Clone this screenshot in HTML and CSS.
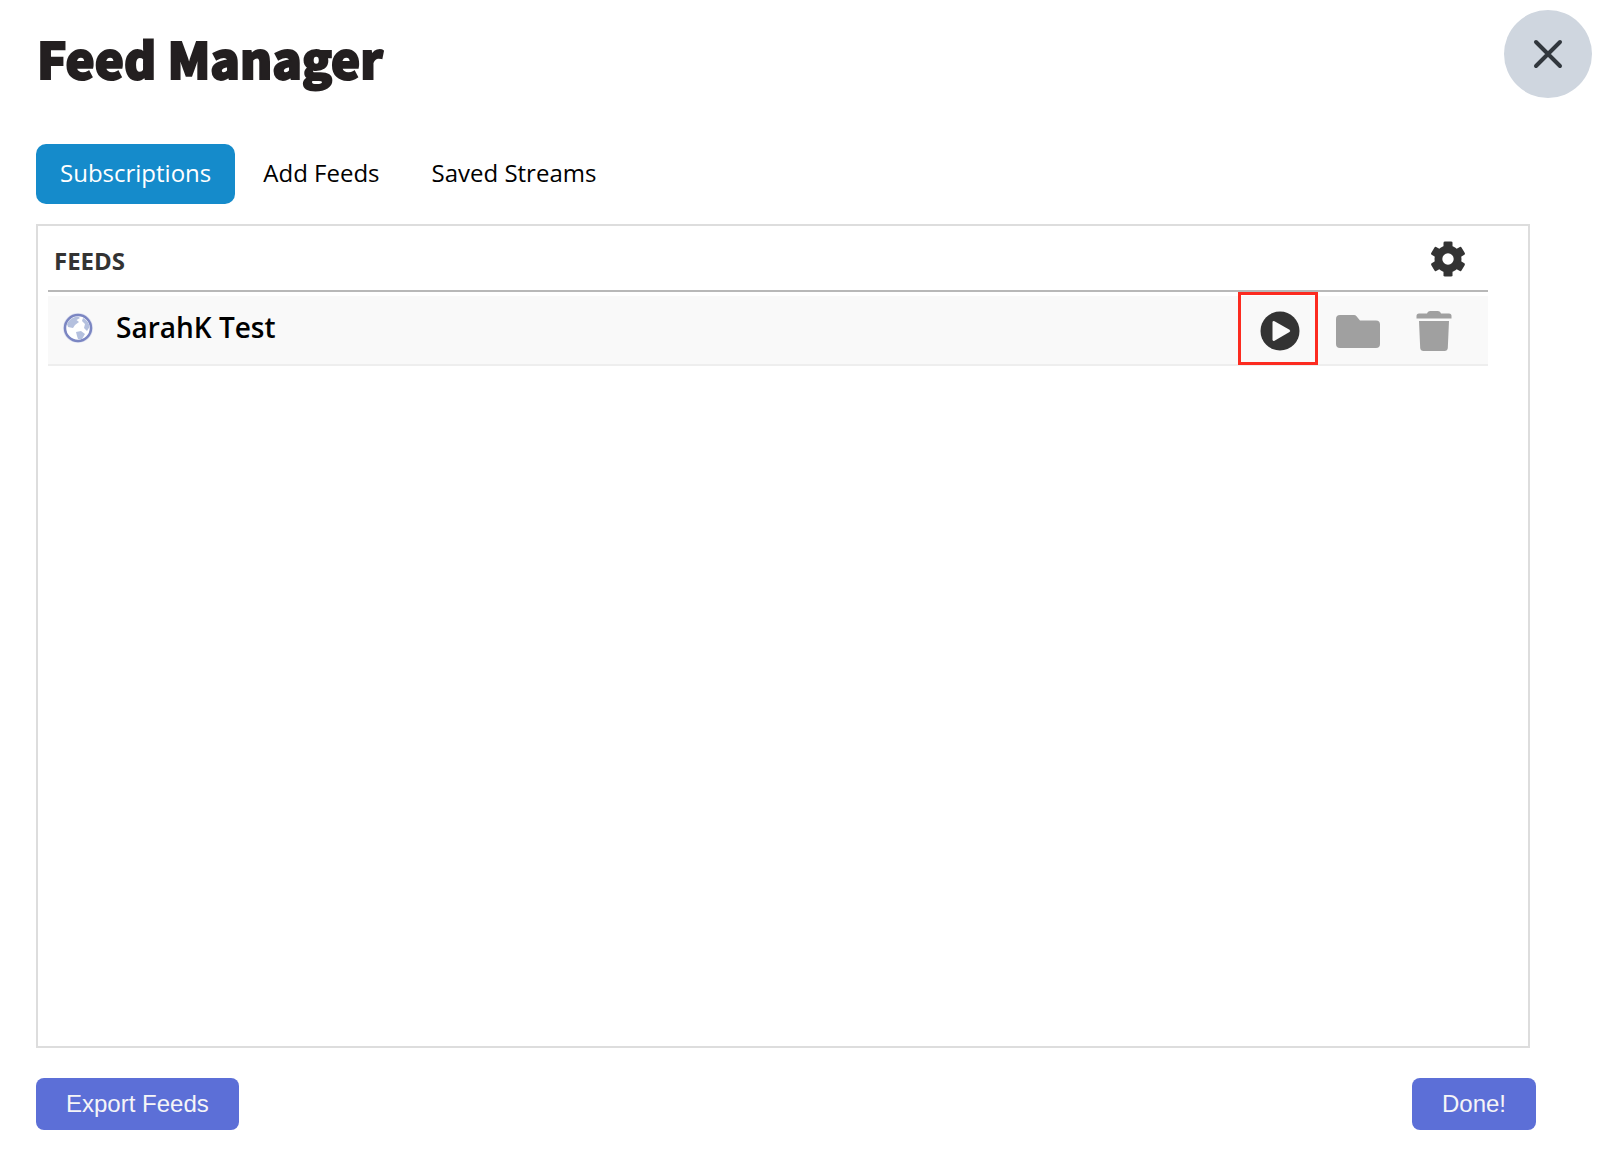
FILE: index.html
```html
<!DOCTYPE html>
<html lang="en">
<head>
<meta charset="utf-8">
<title>Feed Manager</title>
<link rel="stylesheet" href="styles.css">
</head>
<body>
<div class="dialog">
  <header class="header">
    <h1 class="title">Feed Manager</h1>
    <button class="close" type="button" aria-label="Close">
      <svg width="88" height="88" viewBox="0 0 88 88" fill="none" stroke="#31373d" stroke-width="4" stroke-linecap="round"><path d="M32 32L56 56M56 32L32 56"/></svg>
    </button>
  </header>
  <nav class="tabs">
    <a class="tab active" href="#subscriptions">Subscriptions</a>
    <a class="tab" href="#add">Add Feeds</a>
    <a class="tab" href="#streams">Saved Streams</a>
  </nav>
  <main class="panel">
    <div class="panel-head">
      <h2 class="panel-title">FEEDS</h2>
      <button class="icon-button" type="button" aria-label="Settings">
        <svg width="36" height="36" viewBox="-18 -18 36 36" fill="#333">
          <defs><path id="tooth" d="M-4.5 -10L-4.5 -16.300Q-4.500 -17.500 -3 -17.500H3Q4.500 -17.500 4.500 -16.300L4.500 -10Z"/></defs>
          <path fill-rule="evenodd" d="M0 -13.500A13.500 13.500 0 1 1 0 13.500A13.500 13.500 0 1 1 0 -13.500ZM0 -5.700A5.700 5.700 0 1 0 0 5.700A5.700 5.700 0 1 0 0 -5.700Z"/>
          <use href="#tooth"/><use href="#tooth" transform="rotate(60)"/><use href="#tooth" transform="rotate(120)"/><use href="#tooth" transform="rotate(180)"/><use href="#tooth" transform="rotate(240)"/><use href="#tooth" transform="rotate(300)"/>
        </svg>
      </button>
    </div>
    <ul class="feeds">
      <li class="feed">
        <svg class="globe" width="32" height="32" viewBox="0 0 32 32">
          <circle cx="16" cy="16" r="15" fill="#dfe2f1"/>
          <circle cx="16" cy="16" r="13" fill="#fff" stroke="#7b86c2" stroke-width="2.500"/>
          <path fill="#b4c0de" d="M5 12Q8 5 16 4.500L18 6L14.500 8L17 10L13 13L11 16L6 15ZM21 6Q27 9 27.500 15L25 19L22 16L23 12L20 9ZM14 20L19 19L23 22L20 27L16 27L15 24Z"/>
        </svg>
        <span class="feed-name">SarahK Test</span>
        <div class="actions">
          <button class="icon-button play" type="button" aria-label="Play">
            <svg width="40" height="40" viewBox="0 0 40 40"><circle cx="20" cy="20" r="19.500" fill="#333"/><path fill="#f9f9f9" d="M12.500 11.500Q12.500 9.500 14.500 10.200L29.500 18.800Q31 20 29.500 21L14.500 29.800Q12.500 30.500 12.500 28.500Z"/></svg>
          </button>
          <button class="icon-button" type="button" aria-label="Move to folder">
            <svg width="44" height="40" viewBox="0 0 44 40"><path fill="#a0a0a0" d="M4 4H18Q19.500 4 20.500 5.200L24 9.500H40Q44 9.500 44 13.500V33Q44 37 40 37H4Q0 37 0 33V8Q0 4 4 4Z"/></svg>
          </button>
          <button class="icon-button" type="button" aria-label="Delete">
            <svg width="36" height="40" viewBox="0 0 36 40" fill="#a0a0a0"><path d="M3 2.500H11Q11.500 0 14 0H22Q24.500 0 25 2.500H33Q35.500 2.500 35.500 5V7.500H.500V5Q.500 2.500 3 2.500ZM3 10H33L31.800 37Q31.500 40 28.500 40H7.500Q4.500 40 4.200 37Z"/></svg>
          </button>
        </div>
      </li>
    </ul>
  </main>
  <footer class="footer">
    <button class="button" type="button">Export Feeds</button>
    <button class="button" type="button">Done!</button>
  </footer>
</div>
</body>
</html>
```
FILE: styles.css
```css
* {
  box-sizing: border-box;
}

body {
  margin: 0;
  background: #fff;
  color: #000;
  font-family: "Open Sans", "Noto Sans", sans-serif;
  font-size: 24px;
}

button {
  border: 0;
  padding: 0;
  cursor: pointer;
}

svg {
  display: block;
}

.dialog {
  display: flex;
  flex-direction: column;
  min-height: 100vh;
  padding: 10px 10px 22px 36px;
}

.header {
  display: flex;
  justify-content: space-between;
  height: 134px;
}

.title {
  margin: 12px 0 0 1px;
  color: #231f20;
  font-family: "Noto Sans CJK SC", sans-serif;
  font-size: 49px;
  font-weight: 900;
  line-height: 72px;
  -webkit-text-stroke: 2px #231f20;
}

.close {
  width: 88px;
  height: 88px;
  border-radius: 50%;
  background: #cfd6df;
}

.tabs {
  display: flex;
  gap: 4px;
}

.tab {
  padding: 0 24px 2px;
  border-radius: 10px;
  color: #000;
  line-height: 58px;
  text-decoration: none;
}

.tab.active {
  background: #158bcb;
  color: #fff;
}

.panel {
  flex: 1;
  margin: 20px 62px 0 0;
  padding: 0 40px 0 10px;
  border: 2px solid #ddd;
}

.panel-head {
  display: flex;
  align-items: center;
  justify-content: space-between;
  height: 66px;
  padding: 1px 22px 0 6px;
  border-bottom: 2px solid #b8b8b8;
}

.panel-title {
  margin: 5px 0 0;
  color: #333;
  font-size: 24px;
  font-weight: 700;
  line-height: 32px;
}

.icon-button {
  background: none;
}

.feeds {
  margin: 4px 0 0;
  padding: 0;
  list-style: none;
}

.feed {
  display: flex;
  align-items: center;
  height: 70px;
  padding: 0 36px 0 14px;
  border-bottom: 2px solid #eee;
  background: #f9f9f9;
}

.globe {
  margin-bottom: 4px;
}

.feed-name {
  margin-bottom: 6px;
  padding-left: 22px;
  font-size: 28px;
  font-weight: 600;
}

.actions {
  display: flex;
  align-items: center;
  margin: -4px 0 0 auto;
}

.actions .icon-button + .icon-button {
  margin: 6px 0 0 36px;
}

.actions .play {
  padding: 16px 15px 11px 19px;
  border: 3px solid #fc2b20;
}

.actions .play + .icon-button {
  margin-left: 18px;
}

.footer {
  display: flex;
  justify-content: space-between;
  margin: 30px 56px 0 0;
}

.button {
  padding: 0 30px;
  border-radius: 8px;
  background: #5c6fd7;
  color: #f5f5f7;
  font-family: "Liberation Sans", Arial, sans-serif;
  font-size: 24px;
  line-height: 52px;
}
```
